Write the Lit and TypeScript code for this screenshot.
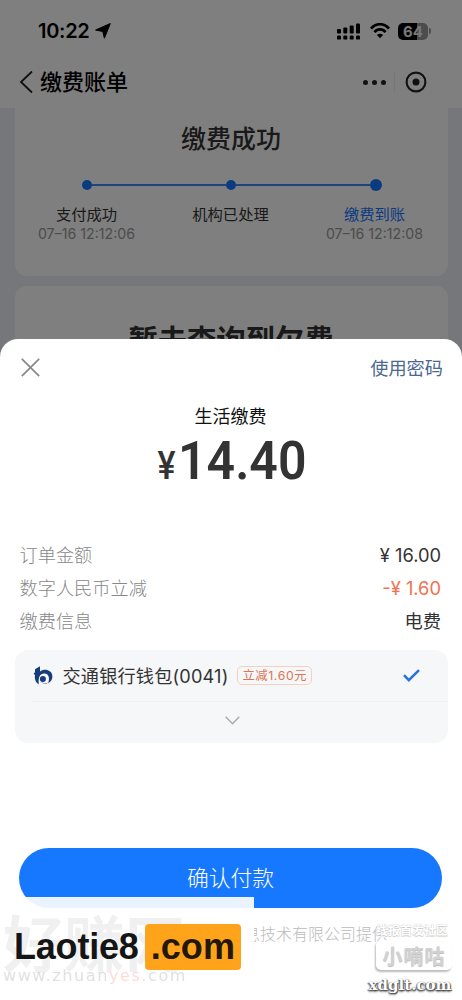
import { LitElement, html, css } from "lit";
import { customElement } from "lit/decorators.js";

@customElement("app-root")
export class AppRoot extends LitElement {
  static styles = css`
    :host { display: block; position: relative; width: 462px; height: 1000px; overflow: hidden; background: #fff;
      font-family: Inter, "Noto Sans CJK SC", sans-serif; color: #333; }
    * { box-sizing: border-box; }
    svg { display: block; flex: none; }
    .page { height: 380px; background: #ebeef4; overflow: hidden; }
    .top { height: 108px; background: #fff; color: #000; }
    .status { height: 62px; padding: 0 31px 0 38px; display: flex; align-items: center; }
    .time { font-size: 20px; line-height: 24px; font-weight: 600; letter-spacing: -0.3px; margin-right: 6px; }
    .grow { flex: 1; }
    .status svg + svg { margin-left: 9px; }
    .batt { margin-left: 8px; width: 33px; height: 17px; display: flex; align-items: center; }
    .cell { width: 30px; height: 17px; border-radius: 5px; background: linear-gradient(90deg, #000 64%, #999 64%); color: #eee;
      font-size: 15px; line-height: 17px; font-weight: 700; text-align: center; }
    .nub { width: 2px; height: 6px; margin-left: 1px; border-radius: 0 2px 2px 0; background: #999; }
    .nav { height: 40px; padding: 0 35px 0 19px; display: flex; align-items: center; }
    .title { font-size: 22px; line-height: 40px; font-weight: 500; margin-left: 7px; }
    .dots { display: flex; gap: 4px; }
    .dots i { width: 5px; height: 5px; border-radius: 50%; background: #222; }
    .sep { width: 1px; height: 20px; background: #eee; margin: 0 10px 0 8px; }
    .card { width: 433px; margin: 0 auto; background: #fff; }
    .done { height: 168px; border-radius: 0 0 12px 12px; padding-top: 11px; }
    .h { text-align: center; font-size: 25px; line-height: 40px; font-weight: 500; }
    .track { margin: 20px 66px 0 67px; height: 12px; display: flex; align-items: center; }
    .track b { width: 10px; height: 10px; border-radius: 50%; background: #1677ff; }
    .track b.big { width: 12px; height: 12px; }
    .track s { flex: 1; height: 2px; background: #3d88f8; }
    .steps { display: grid; grid-template-columns: 144px 144px 144px; margin-top: 14px; text-align: center; font-size: 15.3px; line-height: 20px; }
    .steps .on { color: #1677ff; }
    .steps em { display: block; font-style: normal; font-size: 14.2px; line-height: 18px; color: #999; }
    .owe { margin-top: 10px; height: 110px; border-radius: 12px; padding-top: 35px; text-align: center; font-size: 29.3px; line-height: 40px; font-weight: 700; }
    .mask { position: absolute; inset: 0; background: rgba(0, 0, 0, 0.5); }
    .sheet { position: absolute; left: 0; right: 0; top: 339px; bottom: 0; background: #fff; border-radius: 18px 18px 0 0; }
    .bar { display: flex; justify-content: space-between; align-items: center; padding: 0 19px 0 21px; height: 57px; }
    .link { font-size: 18.2px; line-height: 28px; color: #4b6891; }
    .name { text-align: center; font-size: 18px; line-height: 26px; margin-top: 8px; margin-right: 1px; color: #111; }
    .amount { display: flex; justify-content: center; align-items: baseline; font-family: Roboto, sans-serif; color: #333; height: 62px; line-height: 62px; margin: 0 2px 0 0; }
    .yen { font-size: 39px; font-weight: 500; width: 23px; display: flex; justify-content: center; transform: scaleX(0.87); }
    .num { font-size: 53.5px; font-weight: 600; width: 128px; transform: scaleX(0.935); transform-origin: left; }
    .rows { padding: 46.5px 21px 0 19.5px; font-size: 18.2px; line-height: 33.4px; font-weight: 300; }
    .row { display: flex; justify-content: space-between; }
    .row span { color: #888; }
    .row strong { font-weight: 400; font-size: 18.3px; color: #333; }
    .row .off { color: #f4704f; }
    .wallet { width: 433px; height: 93px; margin: 11px auto 0; border-radius: 13px; background: #f6f7f9; }
    .bank { height: 52px; margin-left: 18px; padding-right: 28px; border-bottom: 1px solid #eeeff1; display: flex; align-items: center; }
    .bn { margin: 2px 0 0 10px; font-size: 18.2px; line-height: 28px; letter-spacing: .15px; }
    .tag { margin-left: 9px; height: 19px; padding: 0 4px; border: 1px solid #f6cfc3; border-radius: 5px; color: #dc7553; font-size: 12.3px; line-height: 17px; letter-spacing: .6px; }
    .more { height: 38px; padding-left: 2px; display: flex; justify-content: center; align-items: center; }
    .pay { margin: 105px 20px 0 19px; height: 60px; border-radius: 30px; background: #1677ff; color: #fff; text-align: center; font-size: 21.8px; line-height: 60px; font-weight: 300; }
    .prov { margin: 13px 0 0 244px; font-size: 16px; line-height: 26px; font-weight: 300; color: #bbb; white-space: nowrap; }
    .cover { position: absolute; left: 0; top: 897px; width: 254px; height: 103px; background: rgba(255, 255, 255, 0.91); }
    .faint { position: absolute; left: 3px; top: 912px; color: rgba(90, 90, 90, 0.09); white-space: nowrap; }
    .big1 { font-size: 61px; line-height: 66px; font-weight: 700; }
    .url { font-family: "DejaVu Sans", sans-serif; font-size: 16px; line-height: 20px; letter-spacing: 1.6px; margin-top: -12px; color: rgba(90, 90, 90, 0.2); }
    .url u { text-decoration: none; color: rgba(240, 90, 80, 0.22); }
    .brand { position: absolute; left: 14px; top: 924px; height: 46px; display: flex; font: 700 36px/46px "Liberation Sans", sans-serif; color: #151515; letter-spacing: -.2px; }
    .brand span { margin-left: 6px; width: 96px; border-radius: 4px; background: #ffa31a; padding-left: 6px; letter-spacing: .1px; color: #22180a; }
    .stamp { position: absolute; left: 368px; top: 922px; width: 84px; display: flex; flex-direction: column; align-items: center; }
    .s1 { font-size: 12px; line-height: 18px; font-weight: 700; color: #fff; text-shadow: 0 0 1px #bbb, 0 1px 1px #ccc; white-space: nowrap; margin-left: 4px; }
    .s2 { width: 76px; height: 30px; border-radius: 5px; background: #fff; box-shadow: -1px 2px 2px #bbb; color: #d2d2d2; font-size: 20px; line-height: 34px; font-weight: 700; text-align: center; letter-spacing: 1px; text-shadow: 0 1px 1px #bbb; margin-left: 8px; }
    .s3 { font: 700 15px/22px "DejaVu Serif", serif; color: #fff; text-shadow: 0 0 1px #444, 1px 1px 1px #555, -1px 1px 1px #777, 0 2px 2px #888; margin-top: 4px; }
  `;

  render() {
    return html`
      <div class="page">
        <div class="top">
          <div class="status">
            <span class="time">10:22</span>
            <svg width="16" height="16" viewBox="0 0 16 16"><path d="M15.3.5 9.4 15.2 7.8 8.5.6 7Z" stroke="#000" stroke-width="1" stroke-linejoin="round"/></svg>
            <span class="grow"></span>
            <svg width="24" height="17" viewBox="0 0 24 17"><rect x="0" y="6" width="4" height="4.5" rx="1"/><rect x="6.3" y="4.5" width="4" height="6" rx="1"/><rect x="12.7" y="2.5" width="4" height="8" rx="1"/><rect x="19" y="0.5" width="4" height="10" rx="1"/><rect x="0" y="12.6" width="4" height="4" rx="1.2"/><rect x="6.3" y="12.6" width="4" height="4" rx="1.2"/><rect x="12.7" y="12.6" width="4" height="4" rx="1.2"/><rect x="19" y="12.6" width="4" height="4" rx="1.2"/></svg>
            <svg width="20" height="16" viewBox="0 0 20 16" fill="none" stroke="#000" stroke-width="2.7"><path d="M1 5.6C6-.2 14-.2 19 5.6M4.4 9.2c3.2-3.7 8-3.7 11.2 0"/><path d="M10 15.2 6.9 11.9c1.7-1.7 4.5-1.7 6.2 0Z" fill="#000" stroke="none"/></svg>
            <span class="batt"><span class="cell">64</span><span class="nub"></span></span>
          </div>
          <div class="nav">
            <svg width="14" height="24" viewBox="0 0 14 24" fill="none" stroke="#222" stroke-width="1.8"><path d="M13 1.5 2 12l11 10.5"/></svg>
            <span class="title">缴费账单</span>
            <span class="grow"></span>
            <span class="dots"><i></i><i></i><i></i></span>
            <span class="sep"></span>
            <svg width="22" height="22" viewBox="0 0 22 22"><circle cx="11" cy="11" r="9.4" fill="none" stroke="#222" stroke-width="2.1"/><circle cx="11" cy="11" r="3.5" fill="#222"/></svg>
          </div>
        </div>
        <div class="card done">
          <div class="h">缴费成功</div>
          <div class="track"><b></b><s></s><b></b><s></s><b class="big"></b></div>
          <div class="steps">
            <div>支付成功<em>07–16 12:12:06</em></div>
            <div>机构已处理</div>
            <div><span class="on">缴费到账</span><em>07–16 12:12:08</em></div>
          </div>
        </div>
        <div class="card owe">暂未查询到欠费</div>
      </div>
      <div class="mask"></div>
      <div class="sheet">
        <div class="bar">
          <svg width="19" height="19" viewBox="0 0 19 19" fill="none" stroke="#888" stroke-width="1.7"><path d="m.8.8 17.4 17.4M18.2.8.8 18.2"/></svg>
          <span class="link">使用密码</span>
        </div>
        <div class="name">生活缴费</div>
        <div class="amount"><span class="yen">¥</span><span class="num">14.40</span></div>
        <div class="rows">
          <div class="row"><span>订单金额</span><strong>¥ 16.00</strong></div>
          <div class="row"><span>数字人民币立减</span><strong class="off">-¥ 1.60</strong></div>
          <div class="row"><span>缴费信息</span><strong>电费</strong></div>
        </div>
        <div class="wallet">
          <div class="bank">
            <svg width="20" height="19" viewBox="0 0 20 19"><path d="M2 3.2 7 .3v5.1C11 2.3 19.4 3.6 19.4 10.6c0 3.2-1.7 5.4-4.3 6.6 1.6-3.4 1.5-9.4-3.7-9.6C7.2 7.4 5 11 5.8 18.2 2.2 16.2 1.5 12.6 2 9.2L.6 7.4 2 6.2Z" fill="#173c7c"/><circle cx="9.9" cy="13" r="3" fill="#173c7c"/><path d="M7.5 15c2 2.4 5 2.7 7.6 1.8-2 1.4-5.6 1.5-7.6-1.8Z" fill="#173c7c"/></svg>
            <span class="bn">交通银行钱包(0041)</span>
            <span class="tag">立减1.60元</span>
            <span class="grow"></span>
            <svg width="17" height="13" viewBox="0 0 17 13" fill="none" stroke="#2873dc" stroke-width="2.5"><path d="m1 6.2 4.8 5L16 1.2"/></svg>
          </div>
          <div class="more"><svg width="15" height="9" viewBox="0 0 15 9" fill="none" stroke="#aaa" stroke-width="1.4"><path d="m.7.8 6.8 7 6.8-7"/></svg></div>
        </div>
        <div class="pay">确认付款</div>
        <div class="prov">息技术有限公司提供</div>
      </div>
      <div class="cover"></div>
      <div class="faint"><div class="big1">好赚网</div><div class="url">www.zhuan<u>yes</u>.com</div></div>
      <div class="brand">Laotie8<span>.com</span></div>
      <div class="stamp"><div class="s1">线报首发社区</div><div class="s2">小嘀咕</div><div class="s3">xdglt.com</div></div>
    `;
  }
}
